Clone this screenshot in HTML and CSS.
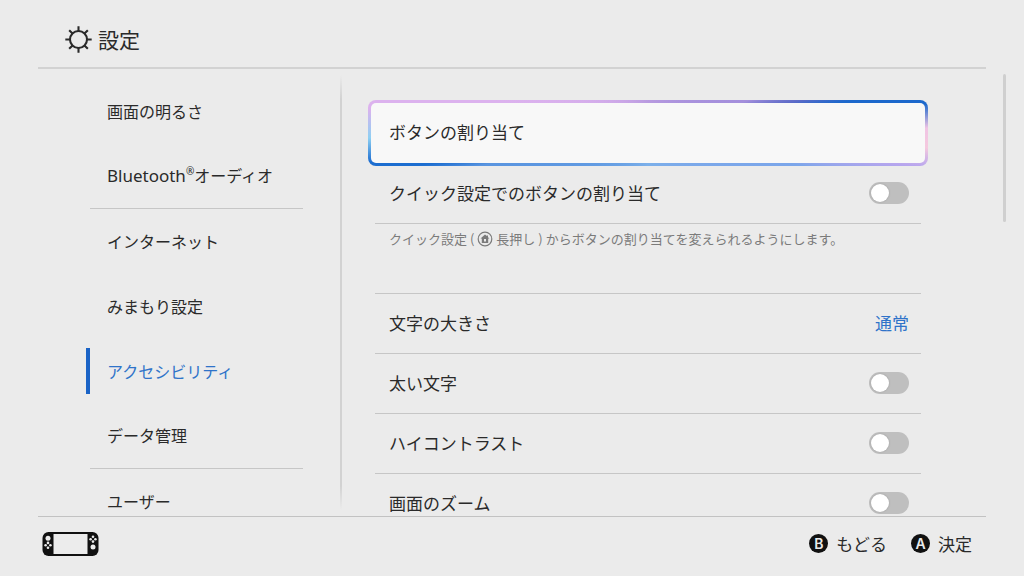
FILE: index.html
```html
<!DOCTYPE html>
<html lang="ja">
<head>
  <meta charset="UTF-8">
  <meta name="viewport" content="width=device-width, initial-scale=1">
  <title>設定</title>
  <link rel="stylesheet" href="styles.css">
</head>
<body>
  <header class="header">
    <svg class="header-icon" viewBox="0 0 26 26" fill="none" stroke="currentColor" stroke-width="2">
      <circle cx="13" cy="13" r="8.200"/>
      <path d="M13 5V.3M13 25.700V21M5 13H.3M25.700 13H21M7.300 7.300L4 4M22 22l-3.300-3.300M7.300 18.700L4 22M22 4l-3.300 3.300"/>
    </svg>
    <h1>設定</h1>
  </header>

  <main class="main">
    <nav class="menu">
      <a href="#">画面の明るさ</a>
      <a href="#" class="group-end"><span><span class="latin">Bluetooth<sup>®</sup></span>オーディオ</span></a>
      <a href="#">インターネット</a>
      <a href="#">みまもり設定</a>
      <a href="#" class="active">アクセシビリティ</a>
      <a href="#" class="group-end">データ管理</a>
      <a href="#">ユーザー</a>
    </nav>

    <div class="divider"></div>

    <section class="content">
      <button class="row focused">ボタンの割り当て</button>
      <label class="row">クイック設定でのボタンの割り当て <input type="checkbox" class="toggle"></label>
      <p class="note">クイック設定<span class="paren">(</span><svg viewBox="0 0 16 16">
          <circle cx="8" cy="8" r="6.800" fill="none" stroke="currentColor" stroke-width="1.200"/>
          <path fill="currentColor" fill-rule="evenodd" d="M8 3.500L3.500 7.500h1.300V12h6.400V7.500h1.300L11 6.200V4.500H9.800v.6zM7 8h2v2.500H7z"/>
        </svg> 長押し<span class="paren">)</span>からボタンの割り当てを変えられるようにします。</p>
      <button class="row">文字の大きさ <span class="value">通常</span></button>
      <label class="row">太い文字 <input type="checkbox" class="toggle"></label>
      <label class="row">ハイコントラスト <input type="checkbox" class="toggle"></label>
      <label class="row">画面のズーム <input type="checkbox" class="toggle"></label>
    </section>

    <div class="scrollbar"></div>
  </main>

  <footer class="footer">
    <svg class="console" viewBox="0 0 56 24">
      <rect width="56" height="24" rx="6" fill="#111"/>
      <rect x="11" y="2" width="34" height="20" fill="#ececec"/>
      <g fill="#ececec">
        <circle cx="5.500" cy="6.300" r="2.500"/>
        <circle cx="50.500" cy="15" r="2.500"/>
        <circle cx="5.500" cy="10.900" r="1.300"/>
        <circle cx="5.500" cy="15.700" r="1.300"/>
        <circle cx="3.100" cy="13.300" r="1.300"/>
        <circle cx="7.900" cy="13.300" r="1.300"/>
        <circle cx="50.500" cy="4.800" r="1.300"/>
        <circle cx="50.500" cy="9.600" r="1.300"/>
        <circle cx="48.100" cy="7.200" r="1.300"/>
        <circle cx="52.900" cy="7.200" r="1.300"/>
      </g>
    </svg>
    <button class="hint"><span class="key">B</span>もどる</button>
    <button class="hint"><span class="key">A</span>決定</button>
  </footer>
</body>
</html>
```
FILE: styles.css
```css
* {
  box-sizing: border-box;
}

body {
  margin: 0;
  height: 100vh;
  display: flex;
  flex-direction: column;
  overflow: hidden;
  background: #ebebeb;
  color: #2a2a2a;
  font-family: "Noto Sans CJK JP", sans-serif;
  font-size: 17px;
  line-height: 24px;
}

button {
  font: inherit;
  color: inherit;
  background: none;
  border: 0;
  padding: 0;
  text-align: left;
  cursor: pointer;
}

.header {
  display: flex;
  align-items: center;
  gap: 6px;
  margin: 0 38px;
  padding: 23px 27px 12px;
  border-bottom: 2px solid #d2d2d2;
}

.header-icon {
  width: 27px;
  height: 27px;
}

.header h1 {
  margin: 0;
  font-size: 21px;
  font-weight: 400;
  line-height: 32px;
}

.main {
  flex: 1;
  min-height: 0;
  display: flex;
  overflow: hidden;
  padding: 0 18px 0 90px;
}

/* left menu */
.menu {
  width: 213px;
  padding-top: 10px;
  font-size: 16px;
}

.menu a {
  display: flex;
  align-items: center;
  height: 65px;
  padding: 0 0 2px 17px;
  color: inherit;
  text-decoration: none;
}

.menu .group-end {
  border-bottom: 1px solid #c6c6c6;
}

.menu .latin {
  font-family: "Noto Sans", sans-serif;
  font-size: 17px;
}

.menu sup {
  font-size: 10px;
  line-height: 0;
}

.menu .active {
  color: #2f73c9;
  padding-left: 0;
}

.menu .active::before {
  content: "";
  width: 4px;
  height: 46px;
  margin: 0 17px 0 -4px;
  background: #1a63c6;
}

.divider {
  width: 2px;
  margin: 6px 33px 6px 37px;
  background: linear-gradient(transparent, #d2d2d2 24px, #d2d2d2 calc(100% - 24px), transparent);
}

/* settings list */
.content {
  flex: 1;
  display: flex;
  flex-direction: column;
  padding-top: 35px;
}

.row {
  flex: none;
  display: flex;
  align-items: center;
  justify-content: space-between;
  height: 60px;
  padding: 0 12px 1px 14px;
  border-bottom: 1px solid #c6c6c6;
}

.row.focused {
  height: 66px;
  margin: -4px -7px -2px;
  padding: 0 18px 2px;
  border: 3px solid transparent;
  border-radius: 8px;
  background:
    linear-gradient(#f8f8f8, #f8f8f8) padding-box,
    conic-gradient(#b99be0 0deg, #a48fdc 72deg, #5c6bc8 78deg, #1c68cc 81deg, #1c68cc 84deg,
      #f0c4e4 89deg, #f5c9de 93deg, #b8a6ee 97deg, #7ba6ea 102deg, #7cb0ea 180deg,
      #5a95e0 259deg, #1c6dd0 262deg, #1c6dd0 264deg, #8fd0f3 269deg, #dcb2ee 275deg,
      #dcb2ee 282deg, #b99be0 360deg) border-box;
}

.value {
  color: #2f73c9;
}

.toggle {
  appearance: none;
  width: 40px;
  height: 22px;
  margin: 0;
  padding: 2px;
  border-radius: 11px;
  background: #bfbfbf;
}

.toggle::before {
  content: "";
  display: block;
  width: 18px;
  height: 18px;
  border-radius: 50%;
  background: #fff;
  box-shadow: 0 0 2px #999;
}

.toggle:checked {
  background: #1a63c6;
}

.toggle:checked::before {
  margin-left: auto;
}

.note {
  flex: none;
  height: 70px;
  margin: 0;
  padding: 3px 14px;
  border-bottom: 1px solid #c6c6c6;
  color: #7b7b7b;
  font-size: 13px;
}

.note svg {
  width: 16px;
  height: 16px;
  vertical-align: -3px;
}

.note .paren {
  padding: 0 3px;
}

.scrollbar {
  width: 3px;
  height: 148px;
  margin: 5px 0 0 82px;
  border-radius: 2px;
  background: #cfcfcf;
}

.footer {
  display: flex;
  align-items: center;
  gap: 24px;
  height: 60px;
  margin: 0 38px;
  padding: 0 14px 6px 4px;
  border-top: 1px solid #c2c2c2;
}

.console {
  width: 57px;
  height: 24px;
  margin-right: auto;
}

.hint {
  display: flex;
  align-items: center;
  gap: 8px;
}

.key {
  width: 19px;
  height: 19px;
  border-radius: 50%;
  background: #111;
  color: #ebebeb;
  font-family: Inter, sans-serif;
  font-size: 14px;
  font-weight: 600;
  line-height: 19px;
  text-align: center;
}
```
